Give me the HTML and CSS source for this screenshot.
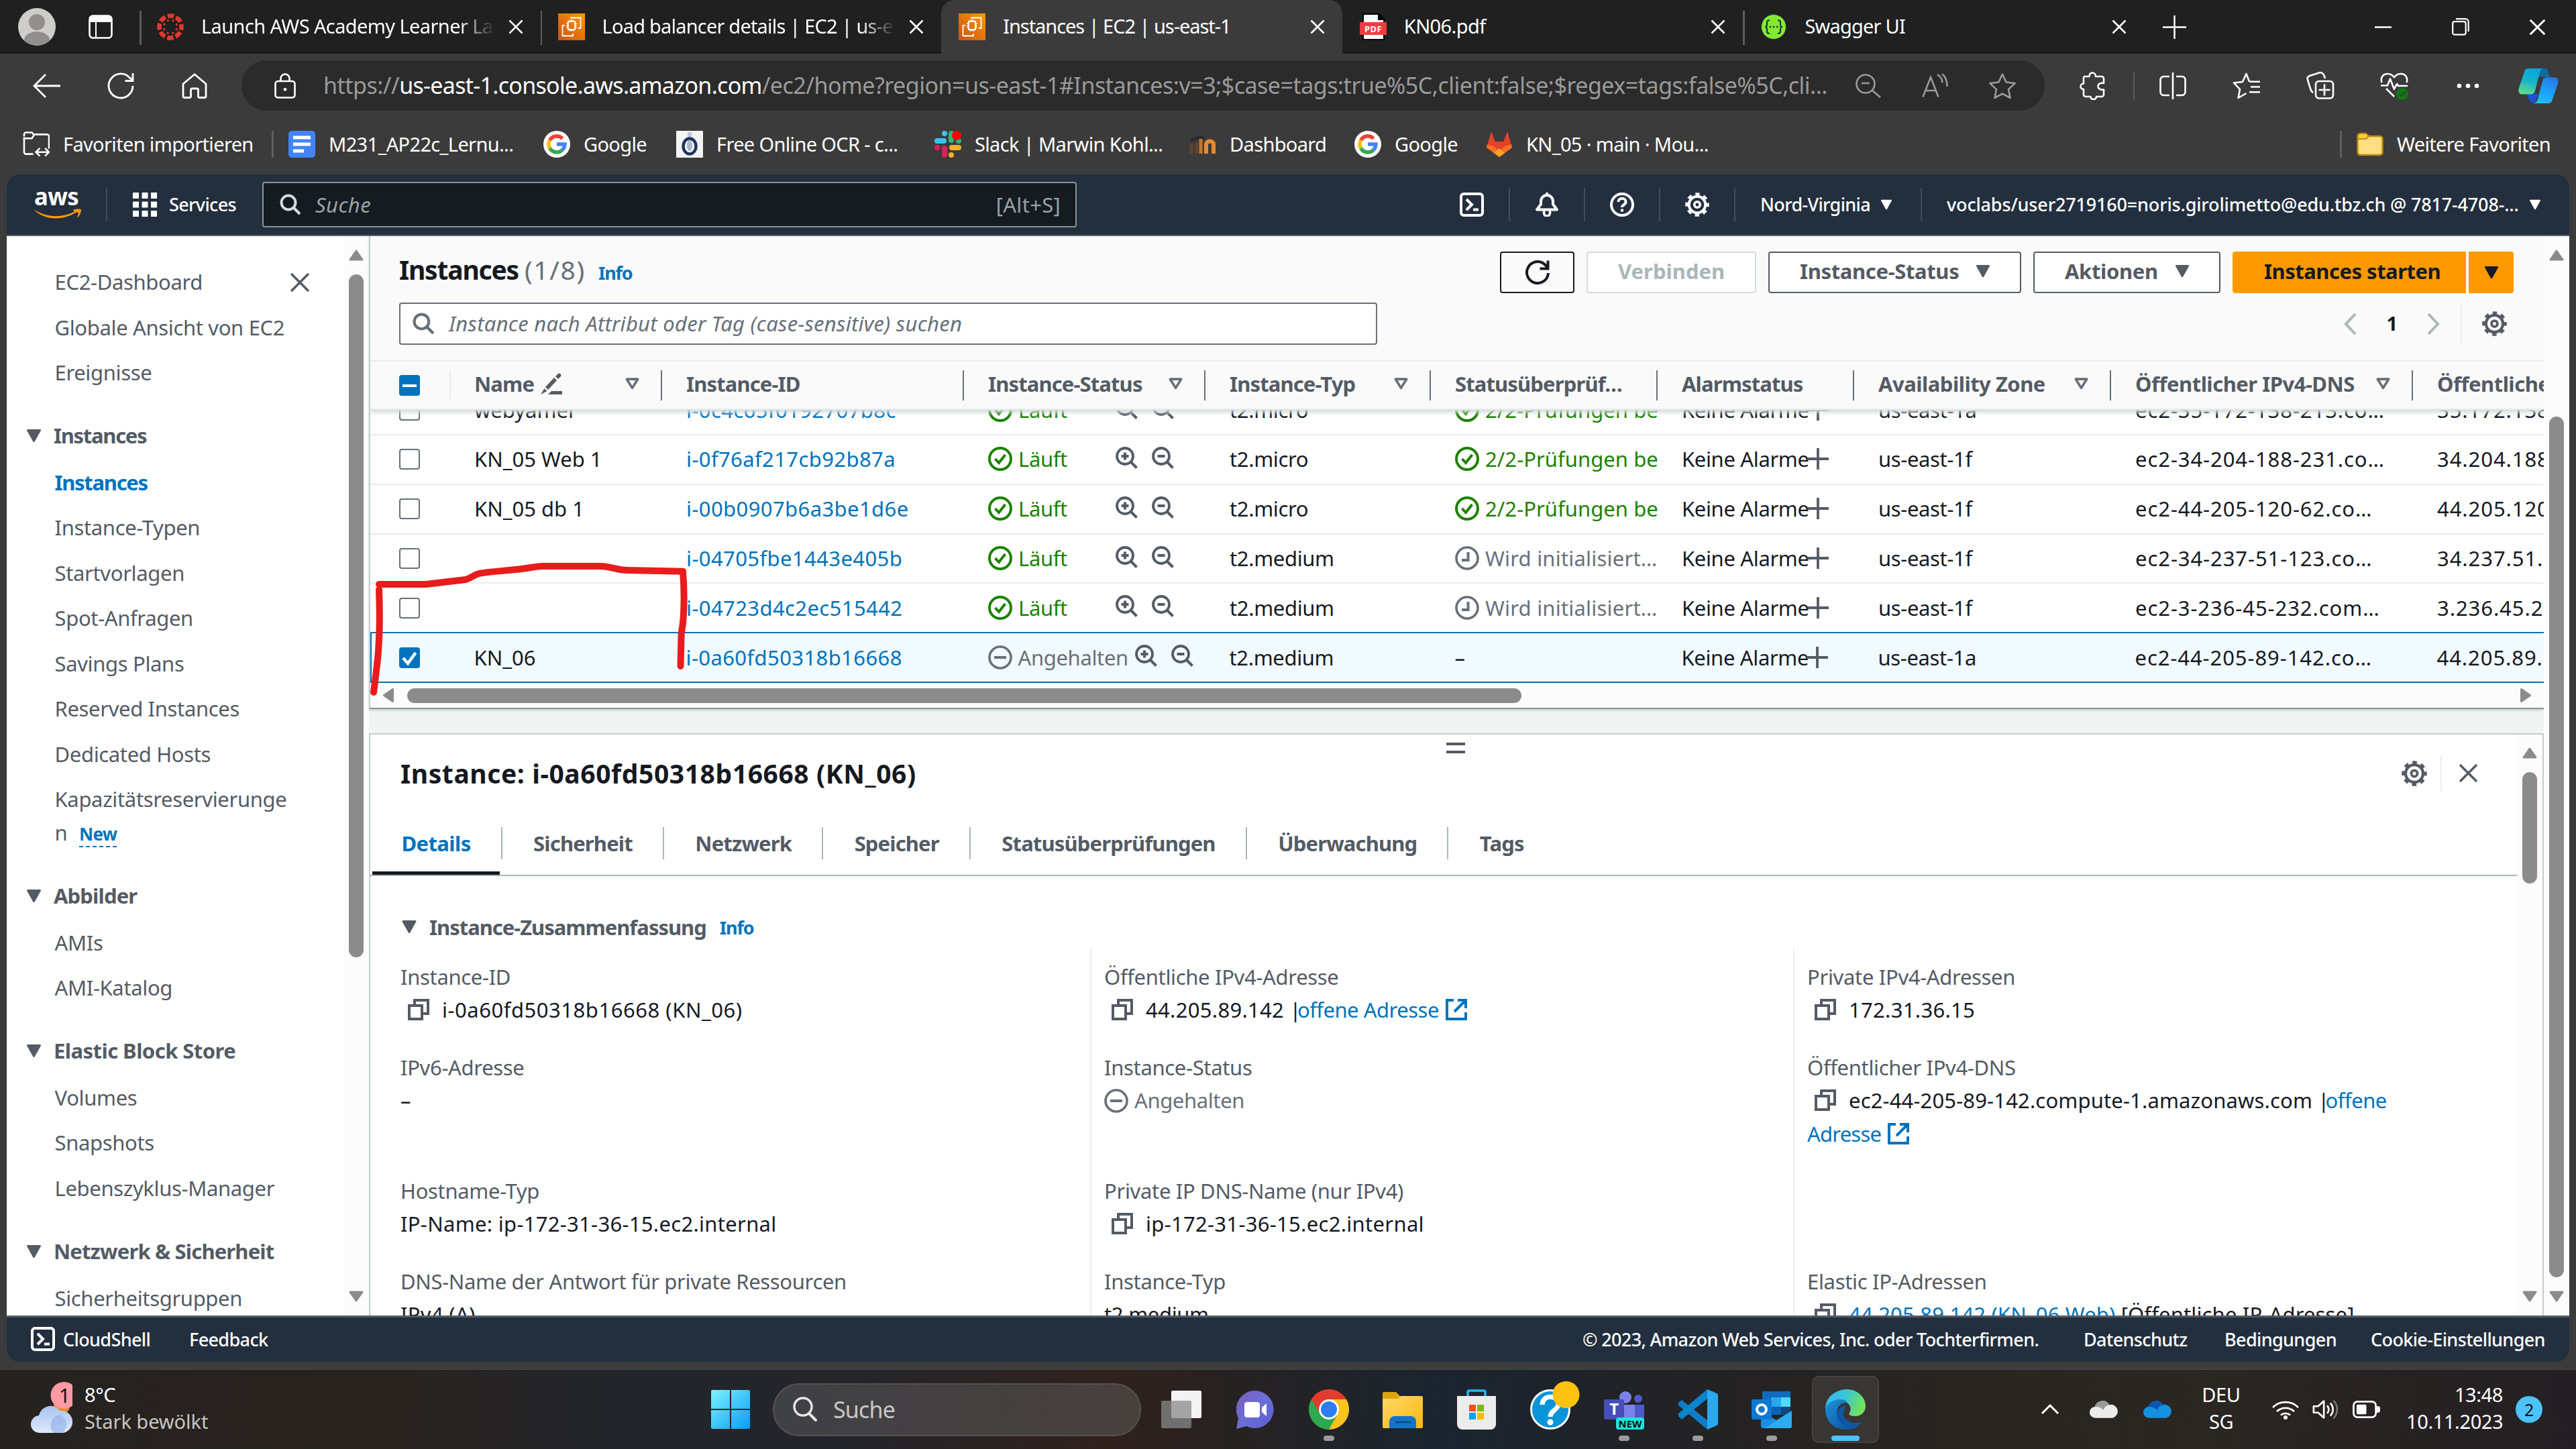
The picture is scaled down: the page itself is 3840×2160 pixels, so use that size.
FILE: index.html
```
<!DOCTYPE html>
<html lang="de">
<head>
<meta charset="utf-8">
<title>Instances | EC2 | us-east-1</title>
<link rel="stylesheet" href="styles.css">
</head>
<body>
<svg class="defs" width="0" height="0" aria-hidden="true">
  <defs>
    <linearGradient id="gEc2" x1="0" y1="1" x2="1" y2="0"><stop offset="0" stop-color="#c8511b"/><stop offset="1" stop-color="#f90"/></linearGradient>
    <linearGradient id="gCopL" x1=".6" y1="0" x2=".3" y2="1"><stop offset="0" stop-color="#0aa5dc"/><stop offset=".5" stop-color="#14b4c8"/><stop offset="1" stop-color="#62dd8c"/></linearGradient>
    <linearGradient id="gCopR" x1=".7" y1="0" x2=".3" y2="1"><stop offset="0" stop-color="#2878e6"/><stop offset=".6" stop-color="#1aa6ff"/><stop offset="1" stop-color="#1fc0f0"/></linearGradient>
    <linearGradient id="gWin" x1="0" y1="0" x2="1" y2="1"><stop offset="0" stop-color="#7df2ff"/><stop offset="1" stop-color="#0a9cf5"/></linearGradient>
    <linearGradient id="gCloud" x1="0" y1="0" x2="0" y2="1"><stop offset="0" stop-color="#a9c3f2"/><stop offset="1" stop-color="#dfe9fb"/></linearGradient>
    <linearGradient id="gChat" x1="0" y1="0" x2="1" y2="1"><stop offset="0" stop-color="#7f5cb8"/><stop offset=".5" stop-color="#6a6fd6"/><stop offset="1" stop-color="#5b5bd0"/></linearGradient>
    <linearGradient id="gFold" x1="0" y1="0" x2="1" y2="1"><stop offset="0" stop-color="#ffd766"/><stop offset="1" stop-color="#fcb814"/></linearGradient>
    <linearGradient id="gEdgeA" x1="0" y1="0" x2="1" y2=".3"><stop offset="0" stop-color="#33b8f2"/><stop offset=".5" stop-color="#35c6d8"/><stop offset="1" stop-color="#6fe35f"/></linearGradient>
    <linearGradient id="gEdgeB" x1="0" y1="0" x2="1" y2="1"><stop offset="0" stop-color="#1a92dc"/><stop offset="1" stop-color="#0d4a94"/></linearGradient>
    <symbol id="close" viewBox="0 0 22 22"><path d="M1.500 1.500l19 19M20.500 1.500l-19 19" fill="none" stroke="currentColor" stroke-width="2.600"/></symbol>
    <symbol id="caret" viewBox="0 0 24 22"><path d="M2.500 2.500h19L12 19.500z" fill="currentColor" stroke="currentColor" stroke-width="3" stroke-linejoin="round"/></symbol>
    <symbol id="sort" viewBox="0 0 24 22"><path d="M3 3.500h18L12 18z" fill="none" stroke="currentColor" stroke-width="4" stroke-linejoin="round"/></symbol>
    <symbol id="ec2" viewBox="0 0 40 40"><path fill="url(#gEc2)" d="M0 0h40v40H0z"/><g fill="none" stroke="#fff" stroke-width="1.800"><path d="M15 12h10v12H15z"/><path d="M17.500 9.500V12M20 9.500V12M22.500 9.500V12M17.500 24v2.500M20 24v2.500M22.500 24v2.500M12.500 15H15M12.500 18H15M12.500 21H15M25 15h2.500M25 18h2.500M25 21h2.500"/><path d="M18 6.500h15.500V22H30M22 30v3.500H6.500V18H10"/></g></symbol>
    <symbol id="gear" viewBox="0 0 36 36"><g fill="none" stroke="currentColor"><circle cx="18" cy="18" r="12.300" stroke-width="4"/><circle cx="18" cy="18" r="15.500" stroke-width="4.600" stroke-dasharray="6.200 5.970" stroke-dashoffset="3.100"/><circle cx="18" cy="18" r="4.300" stroke-width="3.600"/></g></symbol>
    <symbol id="search" viewBox="0 0 32 32"><circle cx="13" cy="13" r="10.500" fill="none" stroke="currentColor" stroke-width="4"/><path d="M20.500 20.500l9.500 9.500" stroke="currentColor" stroke-width="4.200"/></symbol>
    <symbol id="zin" viewBox="0 0 33 33"><circle cx="14" cy="14" r="12" fill="none" stroke="currentColor" stroke-width="3.800"/><path d="M22.500 22.500l9 9M8.500 14h11M14 8.500v11" stroke="currentColor" stroke-width="4"/></symbol>
    <symbol id="zout" viewBox="0 0 33 33"><circle cx="14" cy="14" r="12" fill="none" stroke="currentColor" stroke-width="3.800"/><path d="M22.500 22.500l9 9M8.500 14h11" stroke="currentColor" stroke-width="4"/></symbol>
    <symbol id="ok" viewBox="0 0 36 36"><circle cx="18" cy="18" r="16" fill="none" stroke="currentColor" stroke-width="4"/><path d="M10.500 18l5.500 6 9.500-12" fill="none" stroke="currentColor" stroke-width="4"/></symbol>
    <symbol id="stop" viewBox="0 0 36 36"><circle cx="18" cy="18" r="16" fill="none" stroke="currentColor" stroke-width="3.600"/><path d="M9 18h18" stroke="currentColor" stroke-width="4"/></symbol>
    <symbol id="clock" viewBox="0 0 36 36"><circle cx="18" cy="18" r="16" fill="none" stroke="currentColor" stroke-width="3.600"/><path d="M19.500 9v12H10" fill="none" stroke="currentColor" stroke-width="4"/></symbol>
    <symbol id="plus" viewBox="0 0 32 32"><path d="M16 0v32M0 16h32" stroke="currentColor" stroke-width="3.800"/></symbol>
    <symbol id="copy" viewBox="0 0 32 32"><path d="M2 10h19v20H2zM10 8V2h20v20h-7" fill="none" stroke="currentColor" stroke-width="4"/></symbol>
    <symbol id="ext" viewBox="0 0 32 32"><path d="M12 2H2v28h28V20M18 2h12v12M29 3L13 19" fill="none" stroke="currentColor" stroke-width="4"/></symbol>
    <symbol id="shell" viewBox="0 0 36 36"><rect x="2" y="2" width="32" height="32" rx="4" fill="none" stroke="currentColor" stroke-width="4"/><path d="M10 10l8 8-8 8M20 25.500h8" fill="none" stroke="currentColor" stroke-width="4"/></symbol>
    <symbol id="google" viewBox="0 0 40 40"><circle cx="20" cy="20" r="20" fill="#fff"/><g fill="none" stroke-width="5.500"><path d="M28.500 11.500A12 12 0 0 0 9.600 14" stroke="#ea4335"/><path d="M9.600 14a12 12 0 0 0 0 12" stroke="#fbbc05"/><path d="M9.600 26a12 12 0 0 0 18.500 2.800" stroke="#34a853"/><path d="M28 28.800A12 12 0 0 0 32 20H20" stroke="#4285f4"/></g></symbol>
    <symbol id="up" viewBox="0 0 22 17"><path d="M11 2L2 15h18z" fill="#8b8b8b" stroke="#8b8b8b" stroke-width="3" stroke-linejoin="round"/></symbol>
  </defs>
</svg>

<header class="tabstrip">
  <svg class="avatar" viewBox="0 0 56 56"><circle cx="28" cy="28" r="28" fill="#cfcdc9"/><circle cx="28" cy="21" r="12" fill="#918f8b"/><path d="M9 48a19 13 0 0 1 38 0 28 28 0 0 1-38 0z" fill="#918f8b"/></svg>
  <svg class="workspace" viewBox="0 0 36 36"><rect x="1.500" y="1.500" width="33" height="33" rx="5" fill="none" stroke="#fff" stroke-width="2.600"/><path d="M2 11V6a4 4 0 0 1 4-4h24a4 4 0 0 1 4 4v5z" fill="#fff"/><path d="M11 11v23" stroke="#fff" stroke-width="2"/></svg>
  <div class="tab tab-line">
    <svg class="fav" viewBox="0 0 40 40"><g fill="none" stroke="#e03a2f"><circle cx="20" cy="20" r="16.500" stroke-width="6.500" stroke-dasharray="9.400 3.560" stroke-dashoffset="4.700"/><circle cx="20" cy="20" r="10" stroke-width="2.800" stroke-dasharray="2.800 5.054" stroke-dashoffset="-2.500"/></g></svg>
    <span class="tab-title fade">Launch AWS Academy Learner La</span><svg class="tab-x"><use href="#close"/></svg>
  </div>
  <div class="tab tab-line">
    <svg class="fav"><use href="#ec2"/></svg><span class="tab-title fade tight">Load balancer details | EC2 | us-e</span><svg class="tab-x"><use href="#close"/></svg>
  </div>
  <div class="tab active">
    <svg class="fav"><use href="#ec2"/></svg><span class="tab-title tighter">Instances | EC2 | us-east-1</span><svg class="tab-x"><use href="#close"/></svg>
  </div>
  <div class="tab">
    <svg class="fav" viewBox="0 0 40 40"><path d="M4 0h25l8 8v32H4z" fill="#000"/><path d="M6 2h21v8h8v28H6z" fill="#fff"/><rect y="13" width="40" height="19" rx="1" fill="#f33b3f"/><text x="20" y="28" class="pdf-label">PDF</text></svg>
    <span class="tab-title">KN06.pdf</span><svg class="tab-x"><use href="#close"/></svg>
  </div>
  <div class="tab tab-line">
    <svg class="fav" viewBox="0 0 40 40"><circle cx="20" cy="20" r="18.500" fill="#85ea2d" stroke="#173647" stroke-width="1"/><g fill="none" stroke="#173647" stroke-width="2.200"><path d="M14 10c-4 0-4 2-4 5s0 5-3 5c3 0 3 2 3 5s0 5 4 5M26 10c4 0 4 2 4 5s0 5 3 5c-3 0-3 2-3 5s0 5-4 5"/><path d="M13.500 20h2.500M18.700 20h2.500M24 20h2.500" stroke-width="2.600"/></g></svg>
    <span class="tab-title tight">Swagger UI</span><svg class="tab-x"><use href="#close"/></svg>
  </div>
  <div class="newtab"><svg width="35" height="35" viewBox="0 0 35 35"><path d="M17.500 0v35M0 17.500h35" stroke="#fff" stroke-width="2.500"/></svg></div>
  <div class="winctl"><svg width="25" height="25" viewBox="0 0 25 25"><path d="M0 12.500h25" stroke="#fff" stroke-width="2.500"/></svg></div>
  <div class="winctl"><svg width="26" height="26" viewBox="0 0 26 26"><rect x="1.200" y="5.200" width="19.500" height="19.500" rx="3" fill="none" stroke="#fff" stroke-width="2.200"/><path d="M6 1.200h14a4.500 4.500 0 0 1 4.700 4.700V20" fill="none" stroke="#fff" stroke-width="2.200"/></svg></div>
  <div class="winctl"><svg width="25" height="25"><use href="#close"/></svg></div>
</header>

<div class="toolbar">
  <div class="tbtn"><svg width="42" height="38" viewBox="0 0 42 38"><path d="M41 19H2M19 2L2 19l17 17" fill="none" stroke="#fff" stroke-width="2.800"/></svg></div>
  <div class="tbtn"><svg width="40" height="40" viewBox="0 0 40 40"><path d="M38 20A18 18 0 1 1 33 7.500L38 12M38 1v11.500H26.500" fill="none" stroke="#fff" stroke-width="2.800"/></svg></div>
  <div class="tbtn"><svg width="38" height="38" viewBox="0 0 38 38"><path d="M2 16L19 1.800 36 16v18.500a2 2 0 0 1-2 2h-7.500a2 2 0 0 1-2-2V25a2 2 0 0 0-2-2h-7a2 2 0 0 0-2 2v9.500a2 2 0 0 1-2 2H4a2 2 0 0 1-2-2z" fill="none" stroke="#fff" stroke-width="2.800" stroke-linejoin="round"/></svg></div>
  <div class="urlbar">
    <svg class="lock" viewBox="0 0 32 38"><rect x="1.500" y="12" width="29" height="24.500" rx="4" fill="none" stroke="#fff" stroke-width="2.600"/><path d="M9.500 12V8a6.500 6.500 0 0 1 13 0v4" fill="none" stroke="#fff" stroke-width="2.600"/><circle cx="16" cy="24.300" r="2.400" fill="#fff"/></svg>
    <span class="url">https://<b>us-east-1.console.aws.amazon.com</b><i>/ec2/home?region=us-east-1#Instances:v=3;$case=tags:true%5C,client:false;$regex=tags:false%5C,cli...</i></span>
    <div class="ubtn"><svg width="38" height="36" viewBox="0 0 38 36"><circle cx="15" cy="15" r="13.500" fill="none" stroke="#9a9a9a" stroke-width="2.600"/><path d="M9 14h12M25 25l12 10" stroke="#9a9a9a" stroke-width="2.600"/></svg></div>
    <div class="ubtn"><svg width="40" height="36" viewBox="0 0 40 36"><path d="M1.500 34.500L13 5l11.500 29.500M6 25h14.500M23 1c5 3 7 7 7.500 12M30 0c5 4 7.500 10 7.500 19" fill="none" stroke="#9a9a9a" stroke-width="2.600"/></svg></div>
    <div class="ubtn"><svg width="42" height="40" viewBox="0 0 42 40"><path d="M21 2.500l5.600 12 13.100 1.600-9.700 9 2.600 12.900L21 31.600 9.400 38 12 25.100l-9.700-9 13.100-1.600z" fill="none" stroke="#9a9a9a" stroke-width="2.600" stroke-linejoin="round"/></svg></div>
  </div>
  <div class="tbtn"><svg width="40" height="42" viewBox="0 0 40 42"><path d="M7 7h7.500c0-3 1.500-5.500 4.500-5.500S24 4 24 7h9a3 3 0 0 1 3 3v7c-5-1-8.500 1-8.500 4.500s3.500 6 8.500 5V34a3 3 0 0 1-3 3h-8c0 2.500-2 4-4.500 4s-4-1.500-4-4H9a3 3 0 0 1-3-3v-8c-2.500 0-4.500-1.500-4.500-4S3.500 17.500 6 17.500V10a3 3 0 0 1 1-3z" fill="none" stroke="#fff" stroke-width="2.600" stroke-linejoin="round"/></svg></div>
  <span class="tdiv"></span>
  <div class="tbtn"><svg width="40" height="40" viewBox="0 0 40 40"><path d="M15 6H6.500a5 5 0 0 0-5 5v18a5 5 0 0 0 5 5H15M25 6h8.500a5 5 0 0 1 5 5v18a5 5 0 0 1-5 5H25M20 0v40" fill="none" stroke="#fff" stroke-width="2.600"/></svg></div>
  <div class="tbtn"><svg width="42" height="40" viewBox="0 0 42 40"><path d="M25 13.500L20.500 2l-5.600 12L2 15.600l9 9.500L8.500 38l12-7M25 13.800h16M27 21.500h14M25 29.200h16" fill="none" stroke="#fff" stroke-width="2.600" stroke-linejoin="round"/></svg></div>
  <div class="tbtn"><svg width="42" height="41" viewBox="0 0 42 41"><rect x="14" y="14" width="26" height="25.500" rx="5" fill="none" stroke="#fff" stroke-width="2.600"/><path d="M27 18.500v17M18.500 27h17M10 31c-2-1-3-3-4-6L2 12c-1-3 0-5 3-6l14-4.500c4-1 6 1 7.500 4L28 10" fill="none" stroke="#fff" stroke-width="2.600"/></svg></div>
  <div class="tbtn"><svg width="42" height="42" viewBox="0 0 42 42"><path d="M2.500 16C0 8 5 3 11 3c5 0 7 2 10 5 3-3 5-5 10-5 6 0 11 5 8.500 13M1 20.500h10l4-10 6 15.500 4-8 2 3h14M9 25l12 12" fill="none" stroke="#fff" stroke-width="2.600" stroke-linejoin="round"/><circle cx="33" cy="33" r="9" fill="#0f7a12"/><path d="M28.500 33.500l3 3 6-7" fill="none" stroke="#3b3b3b" stroke-width="2"/></svg></div>
  <div class="tbtn"><svg width="34" height="8" viewBox="0 0 34 8"><g fill="#fff"><circle cx="4" cy="4" r="3.300"/><circle cx="17" cy="4" r="3.300"/><circle cx="30" cy="4" r="3.300"/></g></svg></div>
  <div class="tbtn copilot"><svg width="60" height="54" viewBox="0 0 60 54"><path d="M26 1h13c4 0 5 2 6 7 1 4 3 6 6 6H38c-7 0-9-3-12-6z" fill="#0a6d9e"/><path d="M11 39h19l-6 14c-5 0-7-3-9-8-1-4-2-6-4-6z" fill="#1c4fdc"/><path d="M16 1h22c-4 0-5 3-6.500 8L25 34c-1 4-3 5.500-7 5.500H6C1 39.500-.5 36 1 30L9 6c1-4 3-5 7-5z" fill="url(#gCopL)"/><path d="M44 53H23c4-1 5-3 6.500-8L36 20c1-4 3-5.500 7-5.500h11c5 0 6.500 3.500 5 9L51 47c-1 4-3 6-7 6z" fill="url(#gCopR)"/></svg></div>
</div>

<nav class="bookmarks">
  <div class="bm"><svg class="bi" viewBox="0 0 41 40"><path d="M2 9v23a3 3 0 0 0 3 3h11M17 5h20a3 3 0 0 1 3 3v19M2 8V5a3 3 0 0 1 3-3h9l3 4-3 5H2M26 26l-6 6 6 6M20 32h20M34 26l6 6-6 6" fill="none" stroke="#fff" stroke-width="2.600"/></svg>Favoriten importieren</div>
  <div class="bm first"><svg class="bi" viewBox="0 0 40 40"><rect width="40" height="40" rx="5" fill="#4285f4"/><path d="M7 10h26M7 20h26M7 30h16" stroke="#fff" stroke-width="5"/></svg>M231_AP22c_Lernu...</div>
  <div class="bm"><svg class="bi"><use href="#google"/></svg>Google</div>
  <div class="bm"><svg class="bi" viewBox="0 0 40 40"><path fill="#f4f4f4" d="M0 0h40v40H0z"/><path d="M17 2h6v8h-6z" fill="#c3ccd6"/><ellipse cx="20" cy="23" rx="9.500" ry="11.500" fill="none" stroke="#1f355f" stroke-width="4.500"/><ellipse cx="20" cy="22" rx="4" ry="8" fill="#aeb6c2"/></svg>Free Online OCR - c...</div>
  <div class="bm"><svg class="bi" viewBox="0 0 40 40"><g stroke-width="8" stroke-linecap="round"><path d="M15 4v0M4 15h10" stroke="#36c5f0"/><path d="M25 4v10M36 15v0" stroke="#2eb67d"/><path d="M36 25H26M25 36v0" stroke="#ecb22e"/><path d="M15 36V26M4 25v0" stroke="#e01e5a"/></g><circle cx="33" cy="7" r="7" fill="#f00"/></svg>Slack | Marwin Kohl...</div>
  <div class="bm"><svg class="bi" viewBox="0 0 40 40"><path d="M3 34V20M11 34V18" stroke="#5f4431" stroke-width="5"/><path d="M2 14l14-5 6 3" fill="none" stroke="#2a2a2a" stroke-width="4"/><path d="M25 34V20c0-6 11-6 11 0v14" fill="none" stroke="#e88a2e" stroke-width="6"/><path d="M17 12v22" stroke="#c9752a" stroke-width="5"/></svg>Dashboard</div>
  <div class="bm"><svg class="bi"><use href="#google"/></svg>Google</div>
  <div class="bm"><svg class="bi" viewBox="0 0 40 40"><path d="M20 39L1 25 8 1l6 15h12l6-15 7 24z" fill="#e24329"/><path d="M20 39L1 25l1-5 10 3 8 8 8-8 10-3 1 5z" fill="#fc6d26"/><path d="M20 39l-8-6 8-7 8 7z" fill="#fca326"/></svg>KN_05 · main · Mou...</div>
  <div class="bm last"><svg class="bi" viewBox="0 0 40 36"><path d="M1.500 6a4 4 0 0 1 4-4h8l4 4h17a4 4 0 0 1 4 4v20a4 4 0 0 1-4 4h-29a4 4 0 0 1-4-4z" fill="#ffdd80" stroke="#bd8b0c" stroke-width="2.500"/><path d="M2 10h12l4-4-4-4H6a4 4 0 0 0-4 4z" fill="#ffcf3a" stroke="#bd8b0c" stroke-width="2"/></svg>Weitere Favoriten</div>
</nav>

<div class="page">
  <div class="awsbar">
    <div class="logo"><svg width="71" height="44" viewBox="0 0 71 44"><text x="1" y="23" class="aws-word" textLength="66" lengthAdjust="spacingAndGlyphs">aws</text><path d="M0 29c20 13 42 13 61 3.500l-2-2.500c4-2 10-2 12-.5 0 4-2 9-5.500 12-1-.5 2-5 1-8l-4 .5C44 46 16 46 0 29z" fill="#f90"/></svg></div>
    <div class="services"><svg width="36" height="36" viewBox="0 0 36 36"><path d="M0 4.500h36M0 18h36M0 31.500h36" stroke="#fff" stroke-width="9" stroke-dasharray="9 4.500"/></svg><span>Services</span></div>
    <div class="gsearch"><svg width="34" height="32"><use href="#search"/></svg><em>Suche</em><span>[Alt+S]</span></div>
    <div class="hicons">
      <div><svg><use href="#shell"/></svg></div>
      <div><svg viewBox="0 0 36 36"><path d="M3 25.500l6-8V13a9 9 0 0 1 18 0v4.500l6 8z" fill="none" stroke="#fff" stroke-width="4" stroke-linejoin="round"/><path d="M13.500 27v3.500a4.500 4.500 0 0 0 9 0V27M18 0v5" fill="none" stroke="#fff" stroke-width="3.600"/></svg></div>
      <div><svg viewBox="0 0 36 36"><circle cx="18" cy="18" r="16" fill="none" stroke="#fff" stroke-width="4"/><path d="M12.500 14c0-7 11-7 11 0 0 4.500-5.500 4-5.500 8M18 24.500v4" fill="none" stroke="#fff" stroke-width="4"/></svg></div>
      <div><svg><use href="#gear"/></svg></div>
    </div>
    <div class="region">Nord-Virginia<svg><use href="#caret"/></svg></div>
    <div class="account"><span>voclabs/user2719160=noris.girolimetto@edu.tbz.ch @ 7817-4708-...</span><svg><use href="#caret"/></svg></div>
  </div>

  <div class="body">
    <aside class="side">
      <div class="nav">
        <div class="item first">EC2-Dashboard<svg width="32" height="30"><use href="#close"/></svg></div>
        <div class="item">Globale Ansicht von EC2</div>
        <div class="item">Ereignisse</div>
        <div class="group"><svg><use href="#caret"/></svg><span class="sq">Instances</span></div>
        <div class="item sel">Instances</div>
        <div class="item">Instance-Typen</div>
        <div class="item">Startvorlagen</div>
        <div class="item">Spot-Anfragen</div>
        <div class="item">Savings Plans</div>
        <div class="item">Reserved Instances</div>
        <div class="item">Dedicated Hosts</div>
        <div class="item two">Kapazitätsreservierunge<br>n <span class="new">New</span></div>
        <div class="group"><svg><use href="#caret"/></svg>Abbilder</div>
        <div class="item">AMIs</div>
        <div class="item">AMI-Katalog</div>
        <div class="group"><svg><use href="#caret"/></svg><span class="ebs">Elastic Block Store</span></div>
        <div class="item">Volumes</div>
        <div class="item">Snapshots</div>
        <div class="item">Lebenszyklus-Manager</div>
        <div class="group"><svg><use href="#caret"/></svg>Netzwerk &amp; Sicherheit</div>
        <div class="item">Sicherheitsgruppen</div>
      </div>
      <div class="vscroll"><svg><use href="#up"/></svg><i class="thumb-side"></i><svg class="down"><use href="#up"/></svg></div>
    </aside>

    <main class="main">
      <section class="list">
        <div class="titlebar">
          <h1>Instances <span>(1/8)</span></h1><a class="info">Info</a>
          <div class="buttons">
            <button class="refresh"><svg width="38" height="38" viewBox="0 0 38 38"><path d="M35 20A16 16 0 1 1 30 7.500L34 12M34.500 1.500v12H22.500" fill="none" stroke="#16191f" stroke-width="4"/></svg></button>
            <button class="disabled">Verbinden</button>
            <button class="w-status">Instance-Status<svg><use href="#caret"/></svg></button>
            <button class="w-act">Aktionen<svg><use href="#caret"/></svg></button>
            <div class="split"><button class="primary">Instances starten</button><button class="primary drop"><svg><use href="#caret"/></svg></button></div>
          </div>
        </div>
        <div class="filterbar">
          <div class="filter"><svg width="33" height="33"><use href="#search"/></svg><em>Instance nach Attribut oder Tag (case-sensitive) suchen</em></div>
          <div class="pager">
            <svg width="19" height="34" viewBox="0 0 19 34"><path d="M17 2L3 17l14 15" fill="none" stroke="#aab7b8" stroke-width="4"/></svg><b>1</b><svg width="19" height="34" viewBox="0 0 19 34"><path d="M2 2l14 15L2 32" fill="none" stroke="#aab7b8" stroke-width="4"/></svg>
            <span class="pref"><svg width="37" height="37"><use href="#gear"/></svg></span>
          </div>
        </div>
        <div class="row thead">
          <div class="c chk light"><i class="box mixed"></i></div>
          <div class="c nm">Name<svg class="pen" viewBox="0 0 32 32"><path d="M7 21l13-14 4 4-13 14zM22 5l3.500-3.500a2.800 2.800 0 0 1 4 4L26 9zM5.500 23l4 4L0 32zM16 27h16v5H11z" fill="currentColor"/></svg><svg class="sort"><use href="#sort"/></svg></div>
          <div class="c">Instance-ID</div>
          <div class="c">Instance-Status<svg class="sort"><use href="#sort"/></svg></div>
          <div class="c">Instance-Typ<svg class="sort"><use href="#sort"/></svg></div>
          <div class="c">Statusüberprüf…</div>
          <div class="c">Alarmstatus</div>
          <div class="c az">Availability Zone<svg class="sort"><use href="#sort"/></svg></div>
          <div class="c az">Öffentlicher IPv4-DNS<svg class="sort"><use href="#sort"/></svg></div>
          <div class="c end az">Öffentliche</div>
        </div>
        <div class="rows">
          <div class="row"><div class="c chk"><i class="box"></i></div><div class="c nm">webyamel</div><div class="c id">i-0c4c65f0192707b8c</div><div class="c st ok"><svg><use href="#ok"/></svg><span>Läuft</span><svg class="z"><use href="#zin"/></svg><svg class="z"><use href="#zout"/></svg></div><div class="c">t2.micro</div><div class="c st ok wide"><svg><use href="#ok"/></svg>2/2-Prüfungen be</div><div class="c al">Keine Alarme<svg><use href="#plus"/></svg></div><div class="c">us-east-1a</div><div class="c num">ec2-35-172-138-213.co…</div><div class="c num">35.172.138</div></div>
          <div class="row"><div class="c chk"><i class="box"></i></div><div class="c nm">KN_05 Web 1</div><div class="c id">i-0f76af217cb92b87a</div><div class="c st ok"><svg><use href="#ok"/></svg><span>Läuft</span><svg class="z"><use href="#zin"/></svg><svg class="z"><use href="#zout"/></svg></div><div class="c">t2.micro</div><div class="c st ok wide"><svg><use href="#ok"/></svg>2/2-Prüfungen be</div><div class="c al">Keine Alarme<svg><use href="#plus"/></svg></div><div class="c">us-east-1f</div><div class="c num">ec2-34-204-188-231.co…</div><div class="c num">34.204.188</div></div>
          <div class="row"><div class="c chk"><i class="box"></i></div><div class="c nm">KN_05 db 1</div><div class="c id">i-00b0907b6a3be1d6e</div><div class="c st ok"><svg><use href="#ok"/></svg><span>Läuft</span><svg class="z"><use href="#zin"/></svg><svg class="z"><use href="#zout"/></svg></div><div class="c">t2.micro</div><div class="c st ok wide"><svg><use href="#ok"/></svg>2/2-Prüfungen be</div><div class="c al">Keine Alarme<svg><use href="#plus"/></svg></div><div class="c">us-east-1f</div><div class="c num">ec2-44-205-120-62.co…</div><div class="c num">44.205.120</div></div>
          <div class="row"><div class="c chk"><i class="box"></i></div><div class="c"></div><div class="c id">i-04705fbe1443e405b</div><div class="c st ok"><svg><use href="#ok"/></svg><span>Läuft</span><svg class="z"><use href="#zin"/></svg><svg class="z"><use href="#zout"/></svg></div><div class="c">t2.medium</div><div class="c st gray wide"><svg><use href="#clock"/></svg>Wird initialisiert…</div><div class="c al">Keine Alarme<svg><use href="#plus"/></svg></div><div class="c">us-east-1f</div><div class="c num">ec2-34-237-51-123.co…</div><div class="c num">34.237.51.1</div></div>
          <div class="row"><div class="c chk"><i class="box"></i></div><div class="c"></div><div class="c id">i-04723d4c2ec515442</div><div class="c st ok"><svg><use href="#ok"/></svg><span>Läuft</span><svg class="z"><use href="#zin"/></svg><svg class="z"><use href="#zout"/></svg></div><div class="c">t2.medium</div><div class="c st gray wide"><svg><use href="#clock"/></svg>Wird initialisiert…</div><div class="c al">Keine Alarme<svg><use href="#plus"/></svg></div><div class="c">us-east-1f</div><div class="c num">ec2-3-236-45-232.com…</div><div class="c num">3.236.45.23</div></div>
          <div class="row picked"><div class="c chk"><i class="box on"><svg viewBox="0 0 31 31"><path d="M6 16l7 8L24.500 8" fill="none" stroke="#fff" stroke-width="4.500"/></svg></i></div><div class="c nm">KN_06</div><div class="c id">i-0a60fd50318b16668</div><div class="c st gray"><svg><use href="#stop"/></svg><span>Angehalten</span><svg class="z"><use href="#zin"/></svg><svg class="z"><use href="#zout"/></svg></div><div class="c">t2.medium</div><div class="c">–</div><div class="c al">Keine Alarme<svg><use href="#plus"/></svg></div><div class="c">us-east-1a</div><div class="c num">ec2-44-205-89-142.co…</div><div class="c num">44.205.89.1</div></div>
        </div>
        <div class="hscroll"><svg class="left"><use href="#up"/></svg><i></i><svg class="right"><use href="#up"/></svg></div>
      </section>

      <section class="panel">
        <div class="handle"></div>
        <div class="detail">
          <div class="dhead"><h2>Instance: i-0a60fd50318b16668 (KN_06)</h2><span class="dgear"><svg width="38" height="38"><use href="#gear"/></svg></span><svg class="dx"><use href="#close"/></svg></div>
          <div class="dtabs"><span class="on">Details</span><span>Sicherheit</span><span>Netzwerk</span><span>Speicher</span><span>Statusüberprüfungen</span><span>Überwachung</span><span>Tags</span></div>
          <div class="sumhead"><svg><use href="#caret"/></svg>Instance-Zusammenfassung<a class="info">Info</a></div>
          <div class="cols">
            <div class="col">
              <div class="f"><label>Instance-ID</label><p class="idval"><svg class="copy"><use href="#copy"/></svg>i-0a60fd50318b16668 (KN_06)</p></div>
              <div class="f tall"><label>IPv6-Adresse</label><p>–</p></div>
              <div class="f"><label>Hostname-Typ</label><p>IP-Name: ip-172-31-36-15.ec2.internal</p></div>
              <div class="f"><label class="snug">DNS-Name der Antwort für private Ressourcen</label><p>IPv4 (A)</p></div>
            </div>
            <div class="col">
              <div class="f"><label>Öffentliche IPv4-Adresse</label><p><svg class="copy"><use href="#copy"/></svg>44.205.89.142 |<a class="out">offene Adresse<svg class="ext"><use href="#ext"/></svg></a></p></div>
              <div class="f tall"><label>Instance-Status</label><p class="gray"><svg class="stopi"><use href="#stop"/></svg>Angehalten</p></div>
              <div class="f"><label>Private IP DNS-Name (nur IPv4)</label><p><svg class="copy"><use href="#copy"/></svg>ip-172-31-36-15.ec2.internal</p></div>
              <div class="f"><label>Instance-Typ</label><p class="snug">t2.medium</p></div>
            </div>
            <div class="col">
              <div class="f"><label>Private IPv4-Adressen</label><p><svg class="copy"><use href="#copy"/></svg>172.31.36.15</p></div>
              <div class="f tall"><label>Öffentlicher IPv4-DNS</label><p class="dns"><svg class="copy"><use href="#copy"/></svg>ec2-44-205-89-142.compute-1.amazonaws.com |<a class="out">offene</a><br><a class="out line">Adresse<svg class="ext"><use href="#ext"/></svg></a></p></div>
              <div class="f"></div>
              <div class="f"><label>Elastic IP-Adressen</label><p class="dns"><svg class="copy"><use href="#copy"/></svg><a>44.205.89.142 (KN_06 Web)</a> [Öffentliche IP-Adresse]</p></div>
            </div>
          </div>
        </div>
        <div class="vscroll"><svg><use href="#up"/></svg><i class="thumb-panel"></i><svg class="down"><use href="#up"/></svg></div>
      </section>
    </main>
    <div class="vscroll outer"><svg><use href="#up"/></svg><i class="thumb-outer"></i><svg class="down"><use href="#up"/></svg></div>
    <svg class="scribble" viewBox="0 0 500 220"><g fill="none" stroke="#e81c1c" stroke-width="10" stroke-linecap="round" stroke-linejoin="round"><path d="M25 41h70l59-7c8-2 12-7 20-9s35-4 55-6 30-5 40-5h87c12 0 25 6 39 6l83 1.700c2 25 2 50 .5 71.300-.5 12-3 15-3 27l-1 43"/><path d="M25 49c1 30 1 45 .5 61s-1 25-2 37-4 35-6.500 55"/></g></svg>
  </div>

  <footer class="foot"><svg width="36" height="36"><use href="#shell"/></svg><span class="cs">CloudShell</span><span>Feedback</span><span class="copyr">© 2023, Amazon Web Services, Inc. oder Tochterfirmen.</span><span class="l1">Datenschutz</span><span class="l2">Bedingungen</span><span class="l3">Cookie-Einstellungen</span></footer>
</div>

<div class="taskbar">
  <div class="weather">
    <svg width="62" height="86" viewBox="0 0 62 86"><circle cx="46" cy="38" r="12" fill="#f08a1d"/><path d="M14 78a13 13 0 0 1-2-26 18 18 0 0 1 32-7 16 16 0 0 1 3 33z" fill="url(#gCloud)"/><path d="M34 78a16 16 0 0 1 10-27 16 16 0 0 1 3 27z" fill="#8fadea" opacity=".6"/><circle cx="49.500" cy="22" r="20" fill="#ff99a4"/><text x="50" y="32.500" class="badge-num">1</text></svg>
    <div class="lift">8°C<br><span>Stark bewölkt</span></div>
  </div>
  <div class="app"><svg viewBox="0 0 60 60"><path d="M1 3a2 2 0 0 1 2-2h26v28H1zM31 1h26a2 2 0 0 1 2 2v26H31zM1 31h28v28H3a2 2 0 0 1-2-2zM31 31h28v26a2 2 0 0 1-2 2H31z" fill="url(#gWin)"/></svg></div>
  <div class="tsearch"><svg width="37" height="37" viewBox="0 0 37 37"><circle cx="16" cy="15" r="13" fill="none" stroke="#e6e6e6" stroke-width="3.400"/><path d="M25 25l10 10" stroke="#e6e6e6" stroke-width="4" stroke-linecap="round"/></svg>Suche</div>
  <div class="app"><svg viewBox="0 0 60 60"><rect x="15" y="2" width="45" height="41" rx="2" fill="#f3f3f3"/><rect x="0" y="17" width="45" height="41" rx="2" fill="#8a8a8a" opacity=".75"/></svg></div>
  <div class="app"><svg viewBox="0 0 60 60"><path d="M30 2a28 28 0 1 1-13 53L2 59l3-16A28 28 0 0 1 30 2z" fill="url(#gChat)"/><rect x="14" y="19" width="23" height="23" rx="4" fill="#fff"/><path d="M40 27l7-6v19l-7-6z" fill="#fff"/></svg></div>
  <div class="app run"><svg viewBox="0 0 60 60"><path d="M30 30L4 15a30 30 0 0 0 26 45z" fill="#2da94f"/><path d="M30 30l26-15a30 30 0 0 1-26 45z" fill="#fcc31e"/><path d="M30 15h26L43 37.500z" fill="#fcc31e"/><path d="M43 37.500L30 60l-7-18z" fill="#2da94f"/><path d="M4 15a30 30 0 0 1 52 0H30L17 37.500z" fill="#e33b2e"/><circle cx="30" cy="30" r="15" fill="#fff"/><circle cx="30" cy="30" r="12" fill="#2d7df0"/></svg></div>
  <div class="app"><svg viewBox="0 0 60 60"><path d="M0 6a2 2 0 0 1 2-2h18l6 6v8H0z" fill="#e0a30c"/><path d="M0 14h22l5-4h31a2 2 0 0 1 2 2v44a2 2 0 0 1-2 2H2a2 2 0 0 1-2-2z" fill="url(#gFold)"/><path d="M10 58V48a8 8 0 0 1 8-8h24a8 8 0 0 1 8 8v10z" fill="#1273c8"/><path d="M19 49h23" stroke="#0b4a86" stroke-width="2.500"/></svg></div>
  <div class="app"><svg viewBox="0 0 60 60"><path d="M17 12V4a2 2 0 0 1 2-2h22a2 2 0 0 1 2 2v8" fill="none" stroke="#27b5f7" stroke-width="3.500"/><path d="M1 10h58v42a8 8 0 0 1-8 8H9a8 8 0 0 1-8-8z" fill="#ececec"/><path fill="#f25022" d="M19 23h10v10H19z"/><path fill="#7fba00" d="M31 23h10v10H31z"/><path fill="#00a4ef" d="M19 35h10v10H19z"/><path fill="#ffb900" d="M31 35h10v10H31z"/></svg></div>
  <div class="app"><svg class="over" viewBox="0 0 60 60"><circle cx="30" cy="30" r="28.500" fill="#0a94d8" stroke="#fff" stroke-width="3"/><path d="M18 23c0-16 24-15 24-1 0 9-12 9-12 19" fill="none" stroke="#fff" stroke-width="7"/><circle cx="30" cy="49" r="4.500" fill="#fff"/><circle cx="53.500" cy="8" r="20" fill="#ffc20e"/></svg></div>
  <div class="app run"><svg viewBox="0 0 60 60"><circle cx="32" cy="12" r="9" fill="#7b83eb"/><circle cx="51" cy="14" r="6" fill="#5059c9"/><path d="M24 23h22v20a14 14 0 0 1-22 8z" fill="#7b83eb"/><path d="M46 23h14v18a9 9 0 0 1-14 6z" fill="#5059c9"/><rect y="15" width="30" height="30" rx="3" fill="#464eb8"/><text x="15" y="38" class="teams-t">T</text><rect x="18" y="42" width="42" height="18" rx="4" fill="#19e6dc"/><text x="39" y="56.500" class="new-t">NEW</text></svg></div>
  <div class="app run"><svg viewBox="0 0 60 60"><path d="M1 20l5-4L44 46V60L1 24z" fill="#0f7bc4"/><path d="M1 40l5 5L44 14V0L1 36z" fill="#0a84cc"/><path d="M44 0l14 6a3 3 0 0 1 2 3v42a3 3 0 0 1-2 3l-14 6z" fill="#2aa9f0"/></svg></div>
  <div class="app run"><svg viewBox="0 0 60 60"><rect x="16" y="3" width="42" height="34" fill="#0f6cbd"/><path d="M29 12h15v14H29z" fill="#28a8ea"/><path d="M44 12h14v14H44z" fill="#50d9ff"/><path d="M29 26h15v12H29z" fill="#0364b8"/><path d="M44 26h14v12H44z" fill="#14447d"/><path d="M14 32l23 14 23-14v23a3 3 0 0 1-3 3H17a3 3 0 0 1-3-3z" fill="#1a8fe3"/><path d="M60 32L20 58h37a3 3 0 0 0 3-3z" fill="#35b8f1" opacity=".7"/><rect y="15" width="30" height="30" rx="3" fill="#0f78d4"/><circle cx="15" cy="30" r="7" fill="none" stroke="#fff" stroke-width="4"/></svg></div>
  <div class="app tile"><svg viewBox="0 0 60 60"><path d="M0 30C0 8 20 0 32 0c16 0 28 12 28 25 0 9-7 15-15 15-7 0-11-2-9-5 5-8-2-18-13-18C10 17 2 22 0 30z" fill="url(#gEdgeA)"/><path d="M0 30c2-8 10-15 22-15 6 0 10 3 12 6-8-3-17 3-17 14 0 12 10 20 23 20 5 0 10-2 15-6-6 8-15 11-24 11C13 60 0 48 0 30z" fill="url(#gEdgeB)"/><path d="M31 24c-8 1-14 6-14 14 0 10 9 18 22 18 7 0 13-4 16-8-14 6-28-2-28-12 0-4 2-8 4-12z" fill="#0e57a6"/></svg></div>
  <div class="tray">
    <svg class="chev" viewBox="0 0 28 16"><path d="M2 14L14 2l12 12" fill="none" stroke="#fff" stroke-width="3"/></svg>
    <svg class="cl" viewBox="0 0 44 28"><path d="M9 27a8.500 8.500 0 0 1-1-17 12 12 0 0 1 22-3 10 10 0 0 1 5 20z" fill="#ececec"/><path d="M8 10a12 12 0 0 1 22-3c-6 1-8 5-9 8-4-4-8-5-13-5z" fill="#9a9a9a"/></svg>
    <svg class="cl" viewBox="0 0 44 28"><path d="M9 27a8.500 8.500 0 0 1-1-17 12 12 0 0 1 22-3 10 10 0 0 1 5 20z" fill="#1490df"/><path d="M8 10a12 12 0 0 1 22-3c-6 1-8 5-9 8-4-4-8-5-13-5z" fill="#0a57b0"/></svg>
    <div class="lang lift">DEU<br>SG</div>
    <svg class="wifi" viewBox="0 0 42 30"><g fill="none" stroke="#fff" stroke-width="2.800"><path d="M2 12a27 27 0 0 1 38 0M8 18a19 19 0 0 1 26 0M14 23.500a10.500 10.500 0 0 1 14 0"/></g><circle cx="21" cy="27" r="3" fill="#fff"/></svg>
    <svg class="spk" viewBox="0 0 42 32"><path d="M2 11h7l9-8v26l-9-8H2z" fill="none" stroke="#fff" stroke-width="2.800" stroke-linejoin="round"/><path d="M23 10a8 8 0 0 1 0 12M28 6a14 14 0 0 1 0 20" fill="none" stroke="#fff" stroke-width="2.800"/><path d="M33 2a20 20 0 0 1 0 28" fill="none" stroke="#777" stroke-width="2.800"/></svg>
    <svg class="bat" viewBox="0 0 42 28"><rect x="1.500" y="2" width="34" height="24" rx="6" fill="none" stroke="#fff" stroke-width="2.800"/><rect x="6" y="6.500" width="15" height="15" rx="2" fill="#fff"/><path d="M38 10v8a4 4 0 0 0 0-8z" fill="#fff" stroke="#fff" stroke-width="2"/></svg>
    <div class="clock lift">13:48<br>10.11.2023</div>
    <div class="count">2</div>
  </div>
</div>
</body>
</html>
```
FILE: styles.css
```
* { box-sizing: border-box; }
body {
  margin: 0; width: 3840px; height: 2160px; overflow: hidden;
  background: #3b3b3b; color: #16191f;
  font-family: "Noto Sans", "Open Sans", sans-serif; font-size: 31px; letter-spacing: -.35px;
  font-kerning: normal;
}
svg { display: block; flex: none; }
.defs { position: absolute; }
button { font: inherit; letter-spacing: inherit; color: inherit; }

/* browser chrome */
.tabstrip { display: flex; align-items: center; height: 80px; background: #202020; color: #fff; font-size: 29px; letter-spacing: -.6px; box-shadow: inset 0 -3px 3px -2px #151515; }
.avatar { width: 56px; height: 56px; margin-left: 27px; }
.workspace { width: 36px; height: 36px; margin: 0 40px 0 49px; }
.tab { position: relative; display: flex; align-items: center; width: 597.6px; height: 80px; padding-left: 26px; flex: none; }
.tab-line::before { content: ""; position: absolute; left: 0; top: 16px; width: 2.5px; height: 51px; background: #5c5c5c; }
.tab.active { background: #3b3b3b; border-radius: 20px 20px 0 0; }
.fav { width: 40px; height: 40px; margin-right: 26px; }
.tab-title { width: 437px; white-space: nowrap; line-height: 44px; padding-bottom: 2px; }
.tight { letter-spacing: -.8px; }
.tighter { letter-spacing: -1.05px; }
.fade { -webkit-mask-image: linear-gradient(90deg, #000 88%, transparent); mask-image: linear-gradient(90deg, #000 88%, transparent); }
.tab-x { width: 22px; height: 22px; margin-left: 20.500px; }
.pdf-label { font: 700 13px "Noto Sans", sans-serif; fill: #fff; text-anchor: middle; letter-spacing: .5px; }
.newtab { width: 94px; margin-right: 207px; display: flex; justify-content: center; }
.winctl { width: 115px; display: flex; justify-content: center; flex: none; }

.toolbar { display: flex; align-items: center; height: 95px; padding-left: 15px; }
.tbtn { width: 110px; display: flex; justify-content: center; flex: none; }
.copilot { width: 100px; }
.urlbar { display: flex; align-items: center; width: 2688px; height: 75px; margin: 0 16.500px 0 15px; padding-left: 49px; border-radius: 38px; background: #2b2b2b; }
.lock { width: 32px; height: 38px; margin-right: 41px; }
.url { width: 2253px; color: #9a9a9a; font-size: 34px; letter-spacing: -.5px; white-space: nowrap; padding-bottom: 1px; }
.url b { font-weight: 400; color: #fff; letter-spacing: -.7px; }
.url i { font-style: normal; }
.ubtn { width: 100px; display: flex; justify-content: center; flex: none; }
.tdiv { width: 2.5px; height: 40px; margin: 0 2px 0 5px; background: #5e5e5e; }

.bookmarks { display: grid; grid-template-columns: 396px 380px 198px 385px 380px 246px 196px 1298px auto; align-items: center; height: 85px; padding: 0 0 6px 34px; color: #fff; font-size: 29px; letter-spacing: -.65px; white-space: nowrap; }
.bm { display: flex; align-items: center; gap: 20px; height: 44px; line-height: 42px; }
.bi { width: 40px; height: 40px; }
.bm.first::before, .bm.last::before { content: ""; width: 2.5px; height: 40px; margin: 0 -20px 0 -25px; background: #5e5e5e; }
.bm.first .bi, .bm.last .bi { margin-left: 22.5px; }
.bm.last .bi { height: 36px; }

/* console frame */
.page { margin: 0 10px; width: 3820px; height: 1770px; display: flex; flex-direction: column; border-radius: 20px; overflow: hidden; }
.awsbar { display: flex; align-items: center; height: 92px; border-bottom: 2px solid #545b64; background: #232f3e; color: #fff; font-size: 27px; font-weight: 500; letter-spacing: -.65px; flex: none; white-space: nowrap; }
.logo { width: 150px; padding-left: 40px; height: 50px; display: flex; align-items: center; border-right: 2px solid #414d5c; }
.aws-word { font: 700 36px "Noto Sans", sans-serif; fill: #fff; }
.services { display: flex; align-items: center; gap: 18px; width: 231px; padding-left: 38px; }
.services span { padding-bottom: 1px; }
.gsearch { display: flex; align-items: center; width: 1214px; height: 68px; padding: 0 22px 0 23px; border: 2px solid #879596; border-radius: 4px; background: #161a21; color: #95a5a6; font-size: 31px; font-weight: 400; letter-spacing: .3px; }
.gsearch svg { color: #d5dbdb; }
.gsearch em { margin-left: 20px; flex: 1; letter-spacing: .4px; }
.hicons { display: flex; margin-left: 534px; }
.hicons div { width: 112px; height: 50px; display: flex; align-items: center; justify-content: center; border-right: 2px solid #414d5c; }
.hicons svg { width: 36px; height: 36px; }
.region { display: flex; align-items: center; gap: 15px; width: 278px; height: 50px; padding: 0 0 1px 37px; border-right: 2px solid #414d5c; }
.account { display: flex; align-items: center; gap: 15px; padding: 0 0 1px 37px; letter-spacing: -.17px; }
.region svg, .account svg { width: 18px; height: 16px; }

.body { position: relative; display: flex; height: 1609px; flex: none; background: #fafafa; }
.side { display: flex; width: 540px; background: #fff; color: #545b64; }
.nav { width: 502px; padding-top: 35px; overflow: hidden; height: 1609px; white-space: nowrap; }
.item { height: 67.5px; line-height: 67.5px; padding-left: 71.500px; }
.item.first { display: flex; align-items: center; justify-content: space-between; padding-right: 49px; }
.item.sel { color: #0073bb; font-weight: 700; letter-spacing: -1.3px; }
.item.two { height: 117px; line-height: 50px; padding-top: 8px; }
.new { margin-left: 10px; color: #0073bb; font-size: 26px; font-weight: 700; letter-spacing: -.7px; border-bottom: 2.500px dashed #0073bb; }
.group { display: flex; align-items: center; gap: 18px; height: 73px; margin-top: 23.300px; padding-left: 29px; font-weight: 700; letter-spacing: -.85px; }
.group svg { width: 23px; height: 21px; }
.sq { letter-spacing: -1.3px; }
.ebs { letter-spacing: -.55px; }
.vscroll { display: flex; flex-direction: column; align-items: center; width: 38px; padding: 20px 0; background: #fcfcfc; flex: none; }
.vscroll svg { width: 22px; height: 17px; }
.vscroll i { width: 22px; border-radius: 11px; background: #8b8b8b; margin-top: 20px; }
.vscroll .down { margin-top: auto; }
.down { transform: rotate(180deg); }
.thumb-side { height: 1018px; }
.thumb-panel { height: 166px; }
.vscroll .thumb-outer { height: 1283px; margin-top: 232px; }

.main { width: 3242px; display: flex; flex-direction: column; background: #f2f3f3; }
.list { height: 705px; flex: none; background: #fafafa; border-left: 2px solid #c6cfcf; border-bottom: 2.500px solid #879596; box-shadow: 0 2px 3px #c9d0d0; overflow: hidden; }
.titlebar { display: flex; align-items: center; height: 108px; padding: 0 45px 0 43px; }
h1, h2 { margin: 0; font-size: 39px; line-height: 50px; white-space: nowrap; }
h1 { letter-spacing: -1.2px; padding-bottom: 8px; }
h1 span { color: #687078; font-weight: 400; letter-spacing: 1.700px; }
.info { color: #0073bb; font-size: 27px; font-weight: 700; letter-spacing: -1.2px; }
h1 + .info { margin-left: 19px; padding-bottom: 0; }
.buttons { display: flex; gap: 18px; margin-left: auto; }
button { display: flex; align-items: center; height: 62px; padding: 0 45px 4px; border: 2.300px solid #545b64; border-radius: 4px; background: #fff; color: #545b64; font-weight: 700; letter-spacing: -.35px; white-space: nowrap; }
button svg { width: 24px; height: 20px; margin-left: 24px; }
.refresh { width: 111px; padding: 0; justify-content: center; border-color: #16191f; background: #fafafa; }
.refresh svg { width: 38px; height: 38px; margin: 0; }
.disabled { width: 253px; color: #aab7b8; border-color: #d5dbdb; letter-spacing: 0; }
.w-status { width: 377px; }
.w-act { width: 279px; }
.split { display: flex; gap: 4px; }
.primary { width: 348px; background: #f90; border-color: #f90; color: #16191f; border-radius: 4px 0 0 4px; letter-spacing: -.5px; }
.drop { width: 67px; padding: 0; justify-content: center; border-radius: 0 4px 4px 0; }
.drop svg { margin: 0; }
.filterbar { display: flex; align-items: center; justify-content: space-between; height: 45px; padding: 0 55px 0 43px; }
.filter { display: flex; align-items: center; width: 1458px; height: 63px; padding-left: 18px; border: 2.300px solid #687078; border-radius: 4px; background: #fff; color: #687078; letter-spacing: .27px; }
.filter em { margin-left: 21px; padding-bottom: 1px; }
.pager { display: flex; align-items: center; }
.pager b { width: 105px; text-align: center; font-size: 29px; padding-bottom: 2px; }
.pref { display: flex; align-items: center; height: 62px; margin-left: 31px; padding-left: 30px; border-left: 2px solid #eaeded; color: #545b64; }

.row { display: grid; grid-template-columns: 120px 315px 450px 360px 336px 338px 293px 383px 450px 196px; height: 73.800px; border-bottom: 2.500px solid #eaeded; background: #fff; }
.c { display: flex; align-items: center; padding: 0 0 1px 36px; white-space: nowrap; overflow: hidden; min-width: 0; }
.chk { padding: 0 0 0 43px; }
.rows .nm { padding-left: 35px; letter-spacing: 0; }
.box { display: block; width: 31px; height: 31px; border: 2.300px solid #687078; border-radius: 4px; background: #fff; }
.box.mixed { border: 0; background: linear-gradient(#fff, #fff) center / 21px 4px no-repeat #0073bb; }
.box.on { border: 0; background: #0073bb; }
.thead { position: relative; height: 74px; margin-top: 32px; border-top: 2.500px solid #eaeded; border-bottom: 2px solid #eaeded; background: #fafafa; color: #545b64; font-weight: 700; letter-spacing: -.87px; box-shadow: 0 4px 6px #d5dbdb; z-index: 1; }
.thead .c { position: relative; height: 45px; margin-top: 13px; padding-bottom: 5px; padding-right: 31px; border-right: 2.300px solid #687078; }
.thead .nm { padding-left: 35px; }
.thead .chk { padding: 0 0 0 43px; border-right-color: #eaeded; }
.thead .end { border-right: 0; padding-right: 0; }
.thead .az { letter-spacing: -.5px; }
.pen { width: 32px; height: 32px; margin-left: 10px; }
.sort { width: 23px; height: 20px; margin-left: auto; color: #687078; }
.rows { display: flex; flex-direction: column; justify-content: flex-end; height: 407px; overflow: hidden; }
.rows .row { flex: none; }
.id { color: #0073bb; letter-spacing: .4px; }
.num { letter-spacing: .93px; }
.st svg { width: 36px; height: 36px; margin-right: 9px; }
.st span { min-width: 145px; }
.gray span { min-width: 174px; }
.st .z { width: 33px; height: 33px; margin: -4px 21px 0 0; color: #545b64; }
.ok { color: #1d8102; }
.gray { color: #687078; }
.wide { letter-spacing: .05px; }
.gray.wide { letter-spacing: .2px; }
.al svg { width: 32px; height: 32px; margin-left: -3px; color: #545b64; }
.rows .picked { grid-template-columns: 117.500px 315px 450px 360px 336px 338px 293px 383px 450px 196px; margin-top: -2px; height: 75.800px; border: 2.500px solid #0073bb; border-right: 0; background: #f1faff; }
.rows .picked .chk { padding-left: 40.500px; }
.hscroll { display: flex; align-items: center; height: 37px; padding: 0 18px; background: #fcfcfc; }
.hscroll i { width: 1661px; height: 22px; margin: 0 auto 0 19px; border-radius: 11px; background: #8b8b8b; }
.hscroll svg { width: 22px; height: 17px; margin: 0 -2px; }
.left { transform: rotate(-90deg); }
.right { transform: rotate(90deg); }

.panel { position: relative; display: flex; flex: 1; margin-top: 36px; border: 2px solid #c3cccc; border-bottom: 0; background: #fff; overflow: hidden; }
.handle { position: absolute; left: 1604px; top: 12px; width: 28px; height: 16px; border: solid #545b64; border-width: 4.500px 0; }
.detail { width: 3200px; flex: none; }
.dhead { display: flex; align-items: center; height: 115px; padding: 0 57px 0 45px; }
h2 { letter-spacing: .59px; }
.dgear { display: flex; align-items: center; height: 54px; margin-left: auto; padding-right: 20px; border-right: 2px solid #eaeded; color: #545b64; }
.dx { width: 31px; height: 29px; margin-left: 24px; color: #545b64; }
.dtabs { display: flex; height: 96px; align-items: center; border-bottom: 2.500px solid #aab7b8; color: #545b64; font-weight: 700; letter-spacing: -.85px; }
.dtabs span { position: relative; height: 48px; line-height: 48px; padding: 0 45px 0 46.500px; border-right: 2.300px solid #aab7b8; }
.dtabs span:last-child { border: 0; }
.dtabs .on { color: #0073bb; letter-spacing: -.6px; }
.dtabs .on::after { content: ""; position: absolute; left: 3px; right: 2px; bottom: -23px; height: 5px; background: #16191f; }
.sumhead { display: flex; align-items: center; height: 108px; padding: 43px 0 0 46px; color: #545b64; font-weight: 700; letter-spacing: -1.02px; }
.sumhead svg { width: 24px; height: 21px; margin-right: 18px; }
.sumhead .info { margin: 2px 0 0 20px; }
.cols { display: flex; height: 600px; }
.col { width: 1048px; padding: 17.500px 0 0 19px; border-left: 2.300px solid #eaeded; line-height: 49.500px; flex: none; white-space: nowrap; }
.col:first-child { width: 1073px; padding-left: 45px; border-left: 0; }
.f { height: 135px; }
.tall { height: 184px; }
.f label { display: block; color: #545b64; letter-spacing: -.33px; }
.f p { margin: 0; letter-spacing: .3px; }
.f .snug { letter-spacing: -.35px; }
.f .idval { letter-spacing: .53px; }
.f .dns { letter-spacing: .15px; }
.f .gray { letter-spacing: -.39px; }
.f svg { display: inline-block; vertical-align: -4px; }
.f a { color: #0073bb; }
.f .out { margin-left: -6px; letter-spacing: -.5px; }
.f .line { margin-left: 0; letter-spacing: -.8px; }
.copy { width: 32px; height: 32px; margin: 0 19px 0 11px; color: #545b64; }
.ext { width: 32px; height: 32px; margin-left: 10px; }
.f .stopi { width: 36px; height: 36px; margin-right: 9px; vertical-align: -7px; }
.panel .vscroll { padding-top: 19px; width: 38px; }
.outer { background: #fcfcfc; }
.scribble { position: absolute; left: 530px; top: 478px; width: 500px; height: 220px; }

.foot { display: flex; align-items: center; height: 69px; flex: none; padding: 0 36px 2px; border-top: 3px solid #545b64; background: #232f3e; color: #fff; font-size: 27px; font-weight: 500; letter-spacing: -.63px; white-space: nowrap; }
.cs { width: 188px; margin-left: 12px; }
.copyr { margin-left: auto; width: 747px; }
.l1 { width: 210px; }
.l2 { width: 218px; }
.l3 { width: 260px; }

/* taskbar */
.taskbar { display: flex; align-items: center; height: 120px; margin-top: 10px; border-top: 2.500px solid #444; color: #fff; font-size: 29px; letter-spacing: -.4px; background: linear-gradient(90deg, #26221f 0, #28231f 600px, #22252b 950px, #23252a 1250px, #30211d 1650px, #262222 1850px, #1b2530 2150px, #232224 2500px, #292620 3000px, #2a2622 3300px, #241f22 3840px); }
.lift { padding-bottom: 4px; }
.weather { display: flex; align-items: center; width: 1034px; padding-left: 46px; line-height: 40px; flex: none; }
.weather svg { margin-right: 18px; }
.weather span { color: #c8c6c4; letter-spacing: -.05px; }
.badge-num { font: 29px "Noto Sans", sans-serif; fill: #111; text-anchor: middle; }
.app { position: relative; width: 110px; height: 100px; display: flex; align-items: center; justify-content: center; flex: none; }
.app svg { width: 60px; height: 60px; }
.app .over { overflow: visible; }
.app.run::after, .tile::after { content: ""; position: absolute; left: 47px; bottom: 3px; width: 16px; height: 8px; border-radius: 4px; background: #9b9b9b; }
.tile { width: 100px; margin: 0 5px; border: 2px solid #45423f; border-radius: 10px; background: #383532; }
.app.tile::after { left: 27px; bottom: 1px; width: 42px; background: #4cc2ff; }
.teams-t { font: 700 24px "Noto Sans", sans-serif; fill: #fff; text-anchor: middle; }
.new-t { font: 700 15px "Noto Sans", sans-serif; fill: #111; text-anchor: middle; letter-spacing: 0; }
.tsearch { display: flex; align-items: center; gap: 24px; width: 549px; height: 79px; margin: 0 5px 0 8px; padding: 0 0 1px 27px; border: 2.500px solid #55524f; border-radius: 40px; background: linear-gradient(90deg, #404145, #47403d); color: #c8c8c8; font-size: 34px; letter-spacing: -.8px; flex: none; }
.tray { display: flex; align-items: center; margin-left: auto; padding-right: 50px; line-height: 40px; text-align: center; }
.chev { width: 28px; height: 16px; margin-right: 45px; }
.cl { width: 43px; height: 28px; margin-right: 37px; }
.lang { width: 60px; margin: 0 45px 0 6px; }
.wifi { width: 42px; height: 30px; margin-right: 19px; }
.spk { width: 40px; height: 32px; margin-right: 20px; }
.bat { width: 41px; height: 28px; margin-right: 39px; }
.clock { text-align: right; width: 144px; }
.count { width: 40px; height: 40px; margin-left: 19px; border-radius: 20px; background: #4cc2ff; color: #111; font-size: 25px; }
```
